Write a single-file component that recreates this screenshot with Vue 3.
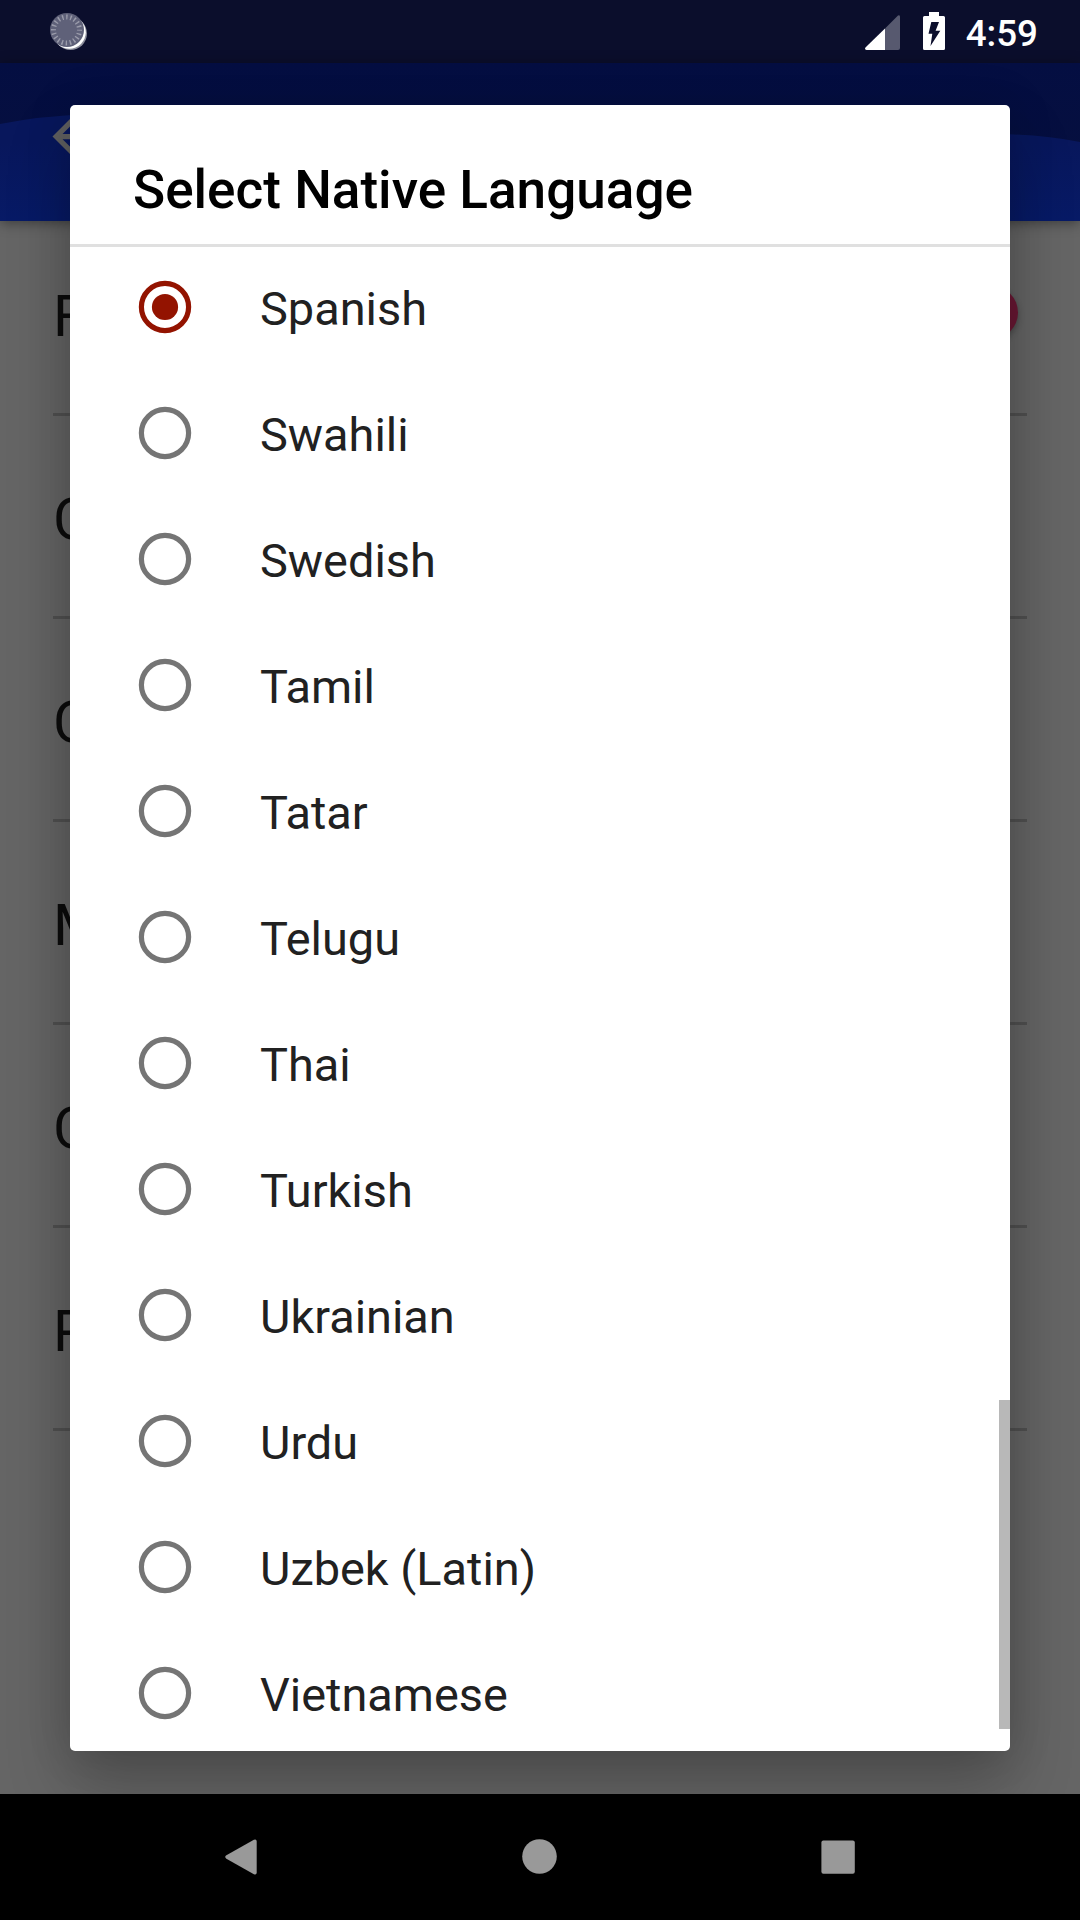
<template>
  <div class="screen">
    <header class="status-bar">
      <svg class="status-bar__sync" viewBox="0 0 38 38" aria-hidden="true">
        <circle cx="20.5" cy="20.5" r="16.5" fill="#8b8d9b" />
        <circle cx="19.3" cy="19.3" r="16.5" fill="#fff" />
        <circle cx="17" cy="17" r="17" fill="#5f6179" />
        <circle
          cx="16.5"
          cy="17"
          r="13"
          fill="none"
          stroke="#9b9cab"
          stroke-width="5"
          stroke-dasharray="1.4 2.684"
          stroke-dashoffset="0.7"
        />
      </svg>

      <div class="status-bar__right">
        <svg class="status-bar__signal" viewBox="0 0 35 35" aria-hidden="true">
          <path d="M33 .6Q35-.6 35 1.8V33Q35 35 33 35H20V13.4Z" fill="#57596f" />
          <path d="M20 13.4V35H1.5Q-1 34.6.7 32.3Z" fill="#fff" />
        </svg>
        <svg class="status-bar__battery" viewBox="0 0 22 38" aria-hidden="true">
          <path
            d="M6 0H16V4H20.5Q22 4 22 5.5V36.5Q22 38 20.5 38H1.5Q0 38 0 36.5V5.5Q0 4 1.5 4H6Z"
            fill="#fff"
          />
          <path d="M8.3 10H16L12.6 18.8H17.3L7.5 34L9.3 21.8H5.5Z" fill="#0b0e2c" />
        </svg>
        <span class="status-bar__time">4:59</span>
      </div>
    </header>

    <div class="toolbar">
      <svg class="toolbar__wave" viewBox="0 0 1080 158" preserveAspectRatio="none" aria-hidden="true">
        <defs>
          <linearGradient id="sky" x1="0" y1="0" x2="0" y2="1">
            <stop offset="0" stop-color="#040e42" />
            <stop offset="1" stop-color="#07103d" />
          </linearGradient>
          <linearGradient id="wave" x1="0" y1="0" x2="0" y2="1">
            <stop offset="0.3" stop-color="#08175c" />
            <stop offset="1" stop-color="#071a66" />
          </linearGradient>
        </defs>
        <rect width="1080" height="158" fill="url(#sky)" />
        <path d="M0 61Q40 53 90 51C400 30 700 72 1000 71Q1045 72 1080 79V158H0Z" fill="url(#wave)" />
      </svg>
      <svg class="toolbar__back" viewBox="0 0 24 24" aria-hidden="true">
        <path
          d="M20 11H7.83l5.59-5.59L12 4l-8 8 8 8 1.41-1.41L7.83 13H20v-2z"
          fill="#606060"
        />
      </svg>
    </div>

    <main class="settings">
      <div v-for="(row, i) in settings" :key="i" class="settings__row">
        <span>{{ row.label }}</span>
        <span v-if="row.toggle" class="settings__thumb"></span>
      </div>
    </main>

    <div class="dialog" role="dialog" aria-modal="true" aria-labelledby="dialog-title">
      <h1 id="dialog-title" class="dialog__title">Select Native Language</h1>
      <div class="dialog__list" role="radiogroup">
        <div
          v-for="language in languages"
          :key="language"
          class="option"
          :class="{ 'option--selected': language === selected }"
          role="radio"
          :aria-checked="language === selected"
          @click="selected = language"
        >
          <svg class="option__radio" viewBox="0 0 54 54" aria-hidden="true">
            <circle cx="27" cy="27" r="23.6" fill="none" stroke="currentColor" stroke-width="5.2" />
            <circle v-if="language === selected" cx="27" cy="27" r="13.1" fill="currentColor" />
          </svg>
          <span class="option__label">{{ language }}</span>
        </div>
      </div>
      <div class="dialog__scrollbar"></div>
    </div>

    <nav class="nav-bar">
      <svg viewBox="0 0 40 40" aria-hidden="true">
        <path d="M4.4 18.3L31.9 2.7Q34.7 1.6 34.7 4.5V35.5Q34.7 38.4 31.9 37.3L4.4 21.7Q2 20 4.4 18.3Z" />
      </svg>
      <svg viewBox="0 0 40 40" aria-hidden="true">
        <circle cx="19.5" cy="19.5" r="17.3" />
      </svg>
      <svg viewBox="0 0 40 40" aria-hidden="true">
        <rect x="3.4" y="3.4" width="33.4" height="33.4" rx="2" />
      </svg>
    </nav>
  </div>
</template>

<script setup>
import { ref } from 'vue'

const settings = [
  { label: 'F', toggle: true },
  { label: 'C' },
  { label: 'C' },
  { label: 'M' },
  { label: 'C' },
  { label: 'P' },
]

const languages = [
  'Spanish',
  'Swahili',
  'Swedish',
  'Tamil',
  'Tatar',
  'Telugu',
  'Thai',
  'Turkish',
  'Ukrainian',
  'Urdu',
  'Uzbek (Latin)',
  'Vietnamese',
]

const selected = ref('Spanish')
</script>

<style>
body {
  margin: 0;
  background: #000;
}
</style>

<style scoped>
.screen {
  position: relative;
  display: flex;
  flex-direction: column;
  width: 1080px;
  height: 1920px;
  overflow: hidden;
  background: #656565;
  font-family: Roboto, sans-serif;
}

.status-bar {
  display: flex;
  justify-content: space-between;
  align-items: flex-start;
  box-sizing: border-box;
  height: 63px;
  padding: 12px 42px 0 50px;
  background: #0b0e2c;
}

.status-bar__sync {
  width: 38px;
  height: 38px;
  margin-top: 1px;
}

.status-bar__right {
  display: flex;
  align-items: flex-end;
  height: 38px;
}

.status-bar__signal {
  width: 35px;
  height: 35px;
  margin-right: 23px;
}

.status-bar__battery {
  width: 22px;
  height: 38px;
  margin-right: 21px;
}

.status-bar__time {
  color: #fff;
  font-size: 36.75px;
  font-weight: 500;
  line-height: 32px;
}

.toolbar {
  position: relative;
  height: 158px;
  flex: none;
  box-shadow: 0 2px 12px rgba(0, 0, 0, 0.4);
}

.toolbar__wave {
  display: block;
  width: 100%;
  height: 100%;
}

.toolbar__back {
  position: absolute;
  top: 42px;
  left: 42px;
  width: 63px;
  height: 63px;
}

.settings {
  flex: 1;
  padding: 0 53px;
}

.settings__row {
  display: flex;
  justify-content: space-between;
  align-items: center;
  box-sizing: border-box;
  height: 203px;
  padding-top: 5px;
  border-bottom: 3px solid #515151;
  color: #0c0c0c;
  font-size: 57.75px;
}

.settings__row:first-child {
  height: 195px;
  padding: 0 0 2px;
}

.settings__thumb {
  width: 53px;
  height: 53px;
  margin: 0 9px 8px 0;
  border-radius: 50%;
  background: #6b1834;
  box-shadow: 0 3px 6px rgba(0, 0, 0, 0.3);
}

.dialog {
  position: absolute;
  top: 105px;
  left: 70px;
  display: flex;
  flex-direction: column;
  width: 940px;
  height: 1646px;
  border-radius: 5px;
  overflow: hidden;
  background: #fff;
  box-shadow: 0 34px 64px rgba(0, 0, 0, 0.24), 0 0 48px rgba(0, 0, 0, 0.12);
}

.dialog__title {
  box-sizing: border-box;
  flex: none;
  height: 142px;
  margin: 0;
  padding: 54px 63px 0;
  border-bottom: 3px solid #e0e0e0;
  color: #000;
  font-size: 53.1px;
  font-weight: 500;
  line-height: 62px;
}

/* list is scrolled slightly, so the first row is tucked under the divider */
.dialog__list {
  flex: 1;
  min-height: 0;
  overflow: hidden;
}

.option {
  display: flex;
  align-items: center;
  height: 126px;
  padding-left: 68px;
  color: #757575;
}

.option:first-child {
  margin-top: -3px;
}

.option--selected {
  color: #931300;
}

.option__radio {
  width: 54px;
  height: 54px;
  margin-right: 68px;
}

.option__label {
  padding-top: 4px;
  color: #212121;
  font-size: 46.9px;
  line-height: 56px;
}

.dialog__scrollbar {
  position: absolute;
  top: 1295px;
  right: 0;
  width: 11px;
  height: 329px;
  background: #b8b8b8;
}

.nav-bar {
  position: relative;
  display: flex;
  justify-content: space-between;
  align-items: center;
  box-sizing: border-box;
  flex: none;
  height: 126px;
  padding: 0 222px;
  background: #000;
}

.nav-bar svg {
  width: 40px;
  height: 40px;
  fill: #999;
}
</style>
